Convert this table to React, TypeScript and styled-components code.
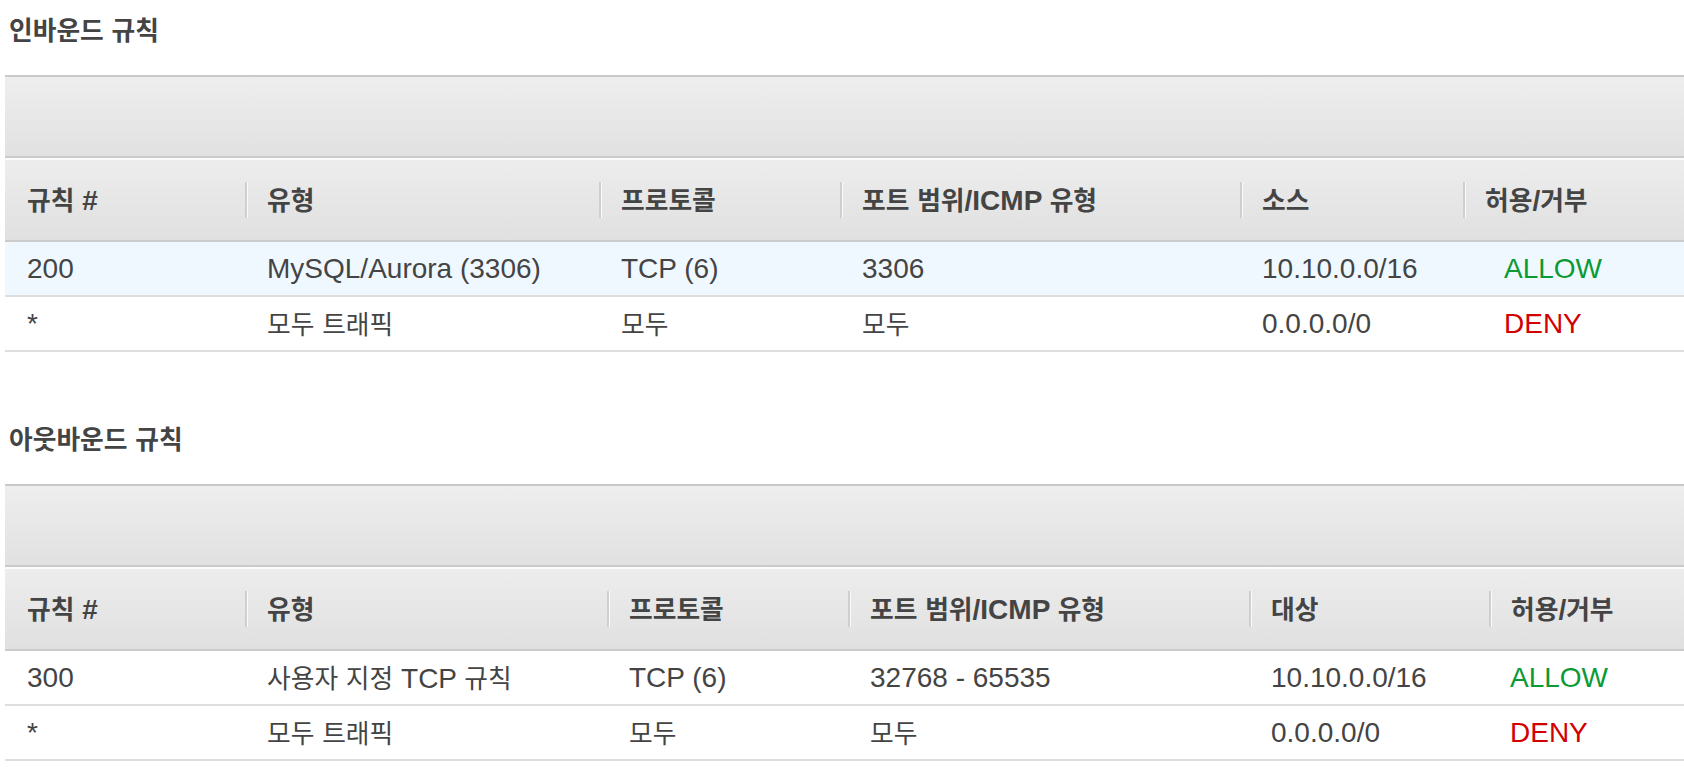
import React from 'react';
import styled, { createGlobalStyle } from 'styled-components';

const GlobalStyle = createGlobalStyle`
  html, body {
    margin: 0;
    padding: 0;
    background: #fff;
  }
  body {
    font-family: 'Liberation Sans', 'Noto Sans CJK KR', sans-serif;
    color: #444;
  }
`;

const Page = styled.div`
  padding: 13px 0 0 5px;
  overflow: hidden;
`;

const Section = styled.section`
  & + & {
    margin-top: 70px;
  }
`;

const Title = styled.h2`
  margin: 0 0 28px 4px;
  font-size: 28px;
  line-height: 32px;
  font-weight: bold;
  color: #444;
`;

// Korean glyphs in the original render narrower than Noto CJK, so shrink them a bit
const Hangul = styled.span`
  font-family: 'Noto Sans CJK KR', sans-serif;
  font-size: 0.92em;
`;

const HANGUL_RE = /([\uAC00-\uD7A3]+)/;

const Label = ({ text }: { text: string }) => (
  <span>
    {text
      .split(HANGUL_RE)
      .map((part, i) => (i % 2 ? <Hangul key={i}>{part}</Hangul> : part))}
  </span>
);

const Table = styled.div`
  border-top: 2px solid #c9c9c9;
`;

const Toolbar = styled.div`
  height: 79px;
  background: linear-gradient(#eeeeee, #e1e1e1);
  border-bottom: 2px solid #cbcbcb;
`;

const Row = styled.div<{ $cols: string; $highlight?: boolean }>`
  display: grid;
  grid-template-columns: ${p => p.$cols};
  height: 53px;
  align-items: center;
  border-bottom: 2px solid #dedede;
  background: ${p => (p.$highlight ? '#f0f8ff' : '#fff')};
  font-size: 28px;
  line-height: 32px;
`;

const HeaderRow = styled(Row)`
  height: 80px;
  border-top: 2px solid #fbfbfb;
  border-bottom: 2px solid #cbcbcb;
  background: linear-gradient(#ededed, #e0e0e0);
  font-weight: bold;
`;

const HeadCell = styled.div<{ $first?: boolean }>`
  display: flex;
  align-items: center;
  height: 100%;
  padding-left: ${p => (p.$first ? '22px' : '0')};
  white-space: pre;
`;

const Divider = styled.span`
  width: 2px;
  height: 36px;
  margin-right: 19px;
  background: #cfcfcf;
  border-right: 1px solid #fafafa;
`;

const Cell = styled.div`
  padding-left: 22px;
  white-space: pre;
  color: #444;
`;

const ActionCell = styled(Cell)<{ $allow: boolean; $pad: number }>`
  padding-left: ${p => p.$pad}px;
  color: ${p => (p.$allow ? '#0c9a34' : '#d20000')};
`;

interface Rule {
  num: string;
  type: string;
  protocol: string;
  ports: string;
  peer: string;
  action: 'ALLOW' | 'DENY';
}

interface RuleTableProps {
  title: string;
  peerLabel: string;
  cols: string;
  actionPad: number;
  rules: Rule[];
  highlightFirst?: boolean;
}

const RuleTable = ({
  title,
  peerLabel,
  cols,
  actionPad,
  rules,
  highlightFirst,
}: RuleTableProps) => {
  const headers = ['규칙 #', '유형', '프로토콜', '포트 범위/ICMP 유형', peerLabel, '허용/거부'];
  return (
    <Section>
      <Title>
        <Label text={title} />
      </Title>
      <Table>
        <Toolbar />
        <HeaderRow $cols={cols}>
          {headers.map((h, i) => (
            <HeadCell key={h} $first={i === 0}>
              {i > 0 && <Divider />}
              <Label text={h} />
            </HeadCell>
          ))}
        </HeaderRow>
        {rules.map((r, i) => (
          <Row key={r.num} $cols={cols} $highlight={highlightFirst && i === 0}>
            <Cell>{r.num}</Cell>
            <Cell>
              <Label text={r.type} />
            </Cell>
            <Cell>
              <Label text={r.protocol} />
            </Cell>
            <Cell>
              <Label text={r.ports} />
            </Cell>
            <Cell>{r.peer}</Cell>
            <ActionCell $allow={r.action === 'ALLOW'} $pad={actionPad}>
              {r.action}
            </ActionCell>
          </Row>
        ))}
      </Table>
    </Section>
  );
};

const inbound: Rule[] = [
  {
    num: '200',
    type: 'MySQL/Aurora (3306)',
    protocol: 'TCP (6)',
    ports: '3306',
    peer: '10.10.0.0/16',
    action: 'ALLOW',
  },
  {
    num: '*',
    type: '모두 트래픽',
    protocol: '모두',
    ports: '모두',
    peer: '0.0.0.0/0',
    action: 'DENY',
  },
];

const outbound: Rule[] = [
  {
    num: '300',
    type: '사용자 지정 TCP 규칙',
    protocol: 'TCP (6)',
    ports: '32768 - 65535',
    peer: '10.10.0.0/16',
    action: 'ALLOW',
  },
  {
    num: '*',
    type: '모두 트래픽',
    protocol: '모두',
    ports: '모두',
    peer: '0.0.0.0/0',
    action: 'DENY',
  },
];

export default function App() {
  return (
    <>
      <GlobalStyle />
      <Page>
        <RuleTable
          title="인바운드 규칙"
          peerLabel="소스"
          cols="240px 354px 241px 400px 223px 1fr"
          actionPad={41}
          rules={inbound}
          highlightFirst
        />
        <RuleTable
          title="아웃바운드 규칙"
          peerLabel="대상"
          cols="240px 362px 241px 401px 240px 1fr"
          actionPad={21}
          rules={outbound}
        />
      </Page>
    </>
  );
}
